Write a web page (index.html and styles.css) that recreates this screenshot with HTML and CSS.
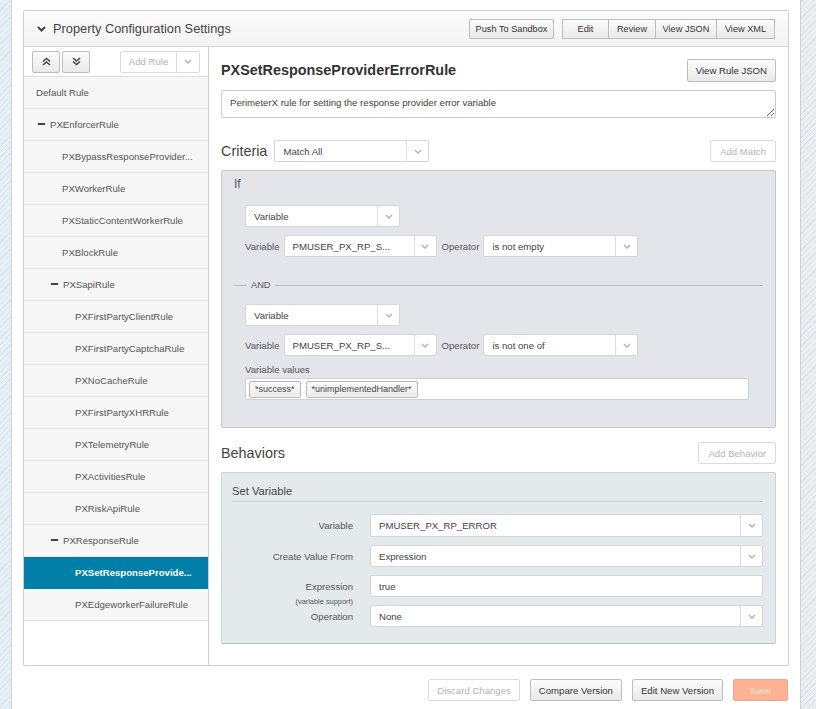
FILE: index.html
```html
<!DOCTYPE html>
<html lang="en">
	<head>
		<meta charset="UTF-8" />
		<meta name="viewport" content="width=device-width, initial-scale=1.0" />
		<title>Property Configuration Settings</title>
		<link rel="stylesheet" href="styles.css">
	</head>
	<body>
		<div class="page">
			<div class="panel">
				<div class="panel__head">
					<svg class="panel__chevron" width="9" height="6" viewBox="0 0 9 6"><polyline points="1,1 4.5,4.5 8,1" fill="none" stroke="#444" stroke-width="2"/></svg>
					<div class="panel__title">Property Configuration Settings</div>
					<div class="panel__actions">
						<button class="btn btn--head btn--w85">Push To Sandbox</button>
						<div class="btn-group">
							<button class="btn btn--head btn--w47">Edit</button>
							<button class="btn btn--head btn--w47">Review</button>
							<button class="btn btn--head btn--w61">View JSON</button>
							<button class="btn btn--head btn--w58">View XML</button>
						</div>
					</div>
				</div>

				<div class="panel__body">
					<div class="sidebar">
						<div class="sidebar__tools">
							<button class="btn btn--icon">
								<svg width="9" height="9" viewBox="0 0 9 9"><polyline points="1,4.5 4.5,1.5 8,4.5" fill="none" stroke="#444" stroke-width="1.6"/><polyline points="1,8 4.5,5 8,8" fill="none" stroke="#444" stroke-width="1.6"/></svg>
							</button>
							<button class="btn btn--icon">
								<svg width="9" height="9" viewBox="0 0 9 9"><polyline points="1,1 4.5,4 8,1" fill="none" stroke="#444" stroke-width="1.6"/><polyline points="1,4.5 4.5,7.5 8,4.5" fill="none" stroke="#444" stroke-width="1.6"/></svg>
							</button>
							<div class="split">
								<button class="btn btn--disabled split__main">Add Rule</button>
								<button class="btn btn--disabled split__arrow">
									<svg width="8" height="5" viewBox="0 0 8 5"><polyline points="1,1 4,4 7,1" fill="none" stroke="#b5b5b5" stroke-width="1.5"/></svg>
								</button>
							</div>
						</div>
						<ul class="tree">
							<li class="tree__item" data-depth="0">Default Rule</li>
							<li class="tree__item tree__item--open" data-depth="1"><span class="tree__minus"></span>PXEnforcerRule</li>
							<li class="tree__item" data-depth="2">PXBypassResponseProvider...</li>
							<li class="tree__item" data-depth="2">PXWorkerRule</li>
							<li class="tree__item" data-depth="2">PXStaticContentWorkerRule</li>
							<li class="tree__item" data-depth="2">PXBlockRule</li>
							<li class="tree__item tree__item--open" data-depth="2"><span class="tree__minus"></span>PXSapiRule</li>
							<li class="tree__item" data-depth="3">PXFirstPartyClientRule</li>
							<li class="tree__item" data-depth="3">PXFirstPartyCaptchaRule</li>
							<li class="tree__item" data-depth="3">PXNoCacheRule</li>
							<li class="tree__item" data-depth="3">PXFirstPartyXHRRule</li>
							<li class="tree__item" data-depth="3">PXTelemetryRule</li>
							<li class="tree__item" data-depth="3">PXActivitiesRule</li>
							<li class="tree__item" data-depth="3">PXRiskApiRule</li>
							<li class="tree__item tree__item--open" data-depth="2"><span class="tree__minus"></span>PXResponseRule</li>
							<li class="tree__item tree__item--active" data-depth="3">PXSetResponseProvide...</li>
							<li class="tree__item" data-depth="3">PXEdgeworkerFailureRule</li>
						</ul>
					</div>

					<div class="main">
						<div class="main__top">
							<h1 class="main__title">PXSetResponseProviderErrorRule</h1>
							<button class="btn btn--big">View Rule JSON</button>
						</div>
						<textarea class="comment" readonly>PerimeterX rule for setting the response provider error variable</textarea>

						<div class="section-head section-head--criteria">
							<div class="section-head__label">Criteria</div>
							<div class="select select--w155">
								<span class="select__value">Match All</span>
								<span class="select__arrow"><svg width="8" height="5" viewBox="0 0 8 5"><polyline points="1,1 4,4 7,1" fill="none" stroke="#b5b5b5" stroke-width="1.5"/></svg></span>
							</div>
							<button class="btn btn--disabled btn--push">Add Match</button>
						</div>

						<div class="criteria">
							<div class="criteria__if">If</div>

							<div class="cond">
								<div class="select select--w155">
									<span class="select__value">Variable</span>
									<span class="select__arrow"><svg width="8" height="5" viewBox="0 0 8 5"><polyline points="1,1 4,4 7,1" fill="none" stroke="#b5b5b5" stroke-width="1.5"/></svg></span>
								</div>
								<div class="cond__row">
									<span class="cond__label">Variable</span>
									<div class="select select--w153">
										<span class="select__value">PMUSER_PX_RP_S...</span>
										<span class="select__arrow"><svg width="8" height="5" viewBox="0 0 8 5"><polyline points="1,1 4,4 7,1" fill="none" stroke="#b5b5b5" stroke-width="1.5"/></svg></span>
									</div>
									<span class="cond__label">Operator</span>
									<div class="select select--w155">
										<span class="select__value">is not empty</span>
										<span class="select__arrow"><svg width="8" height="5" viewBox="0 0 8 5"><polyline points="1,1 4,4 7,1" fill="none" stroke="#b5b5b5" stroke-width="1.5"/></svg></span>
									</div>
								</div>
							</div>

							<div class="joiner"><span class="joiner__dash"></span><span class="joiner__text">AND</span><span class="joiner__line"></span></div>

							<div class="cond">
								<div class="select select--w155">
									<span class="select__value">Variable</span>
									<span class="select__arrow"><svg width="8" height="5" viewBox="0 0 8 5"><polyline points="1,1 4,4 7,1" fill="none" stroke="#b5b5b5" stroke-width="1.5"/></svg></span>
								</div>
								<div class="cond__row">
									<span class="cond__label">Variable</span>
									<div class="select select--w153">
										<span class="select__value">PMUSER_PX_RP_S...</span>
										<span class="select__arrow"><svg width="8" height="5" viewBox="0 0 8 5"><polyline points="1,1 4,4 7,1" fill="none" stroke="#b5b5b5" stroke-width="1.5"/></svg></span>
									</div>
									<span class="cond__label">Operator</span>
									<div class="select select--w155">
										<span class="select__value">is not one of</span>
										<span class="select__arrow"><svg width="8" height="5" viewBox="0 0 8 5"><polyline points="1,1 4,4 7,1" fill="none" stroke="#b5b5b5" stroke-width="1.5"/></svg></span>
									</div>
								</div>
								<div class="cond__values-label">Variable values</div>
								<div class="tags">
									<span class="tag">*success*</span>
									<span class="tag">*unimplementedHandler*</span>
								</div>
							</div>
						</div>

						<div class="section-head section-head--behaviors">
							<div class="section-head__label">Behaviors</div>
							<button class="btn btn--disabled btn--push">Add Behavior</button>
						</div>

						<div class="behavior">
							<div class="behavior__title">Set Variable</div>
							<div class="field">
								<label class="field__label">Variable</label>
								<div class="select select--wide">
									<span class="select__value">PMUSER_PX_RP_ERROR</span>
									<span class="select__arrow"><svg width="8" height="5" viewBox="0 0 8 5"><polyline points="1,1 4,4 7,1" fill="none" stroke="#b5b5b5" stroke-width="1.5"/></svg></span>
								</div>
							</div>
							<div class="field">
								<label class="field__label">Create Value From</label>
								<div class="select select--wide">
									<span class="select__value">Expression</span>
									<span class="select__arrow"><svg width="8" height="5" viewBox="0 0 8 5"><polyline points="1,1 4,4 7,1" fill="none" stroke="#b5b5b5" stroke-width="1.5"/></svg></span>
								</div>
							</div>
							<div class="field">
								<label class="field__label">Expression<span class="field__note">(variable support)</span></label>
								<div class="input">true</div>
							</div>
							<div class="field">
								<label class="field__label">Operation</label>
								<div class="select select--wide">
									<span class="select__value">None</span>
									<span class="select__arrow"><svg width="8" height="5" viewBox="0 0 8 5"><polyline points="1,1 4,4 7,1" fill="none" stroke="#b5b5b5" stroke-width="1.5"/></svg></span>
								</div>
							</div>
						</div>
					</div>
				</div>
			</div>

			<div class="footer">
				<button class="btn btn--disabled btn--foot">Discard Changes</button>
				<button class="btn btn--foot">Compare Version</button>
				<button class="btn btn--foot">Edit New Version</button>
				<button class="btn btn--save">Save</button>
			</div>
		</div>
	</body>
</html>
```

FILE: styles.css
```css
* {
	box-sizing: border-box;
}
body {
	margin: 0;
	height: 709px;
	overflow: hidden;
	font-family: "Liberation Sans", Arial, sans-serif;
	font-size: 9.6px;
	color: #555;
	background: repeating-linear-gradient(135deg, #e8eef2 0, #e8eef2 3px, #dde5ea 3px, #dde5ea 4px);
}
.page {
	margin-left: 11px;
	width: 790px;
	height: 709px;
	padding: 10px 11px 0 11px;
	background: #fff;
	border-left: 1px solid #ccd2d6;
	border-right: 1px solid #ccd2d6;
}

/* panel */

.panel {
	border: 1px solid #cfcfcf;
	border-radius: 2px;
}
.panel__head {
	display: flex;
	align-items: center;
	height: 36px;
	padding: 0 13px;
	border-bottom: 1px solid #d4d4d4;
	background: linear-gradient(#fbfbfb, #f3f3f3);
}
.panel__chevron {
	margin-right: 7px;
}
.panel__title {
	font-size: 12.8px;
	color: #444;
}
.panel__actions {
	display: flex;
	gap: 8px;
	margin-left: auto;
}
.btn-group {
	display: flex;
}
.btn-group .btn + .btn {
	border-left: 0;
}

.btn {
	font-family: inherit;
	font-size: 9.6px;
	color: #333;
	height: 22px;
	padding: 0 10px;
	border: 1px solid #bdbdbd;
	border-radius: 2px;
	background: linear-gradient(#fcfcfc, #e9e9e9);
	cursor: pointer;
	white-space: nowrap;
}
.btn--head {
	height: 20px;
	padding: 0;
	font-size: 9.2px;
}
.btn-group .btn {
	border-radius: 0;
}
.btn--w85 { width: 85px; }
.btn--w47 { width: 47px; }
.btn--w61 { width: 61px; }
.btn--w58 { width: 58px; }
.btn--big {
	height: 23px;
	padding: 0 8px;
	margin-left: auto;
}
.btn--disabled {
	color: #b5b5b5;
	background: #fff;
	border-color: #dcdcdc;
}
.btn--icon {
	width: 28px;
	padding: 0;
	display: flex;
	align-items: center;
	justify-content: center;
}

/* body */

.panel__body {
	display: flex;
	height: 618px;
}
.sidebar {
	width: 185px;
	flex-shrink: 0;
	border-right: 1px solid #cfcfcf;
}
.sidebar__tools {
	display: flex;
	align-items: center;
	gap: 2px;
	height: 30px;
	padding: 0 8px 0 8px;
	border-bottom: 1px solid #ddd;
}
.split {
	display: flex;
	margin-left: auto;
}
.split__main {
	width: 57px;
	padding: 0;
	border-radius: 2px 0 0 2px;
}
.split__arrow {
	width: 23px;
	padding: 0;
	border-left: 0;
	border-radius: 0 2px 2px 0;
	display: flex;
	align-items: center;
	justify-content: center;
}

.tree {
	list-style: none;
	margin: 0;
	padding: 0;
}
.tree__item {
	height: 32px;
	line-height: 31px;
	padding-right: 8px;
	border-bottom: 1px solid #e0e0e0;
	background: #f7f7f7;
	white-space: nowrap;
	overflow: hidden;
	color: #555;
}
.tree__item[data-depth='0'] { padding-left: 12px; }
.tree__item[data-depth='1'] { padding-left: 14px; }
.tree__item[data-depth='2'] { padding-left: 38px; }
.tree__item[data-depth='3'] { padding-left: 51px; }
.tree__item--open[data-depth='2'] { padding-left: 27px; }
.tree__item--active {
	background: #0080a9;
	color: #fff;
	font-weight: bold;
	border-bottom-color: #0080a9;
}
.tree__minus {
	display: inline-block;
	vertical-align: middle;
	width: 7px;
	height: 2px;
	margin: -2px 5px 0 0;
	background: #444;
}

/* main */

.main {
	flex: 1;
	padding: 12px 13px 0 12px;
}
.main__top {
	display: flex;
	align-items: center;
	height: 22px;
}
.main__title {
	margin: 0;
	font-size: 14.4px;
	color: #333;
}
.comment {
	display: block;
	width: 100%;
	height: 28px;
	margin-top: 9px;
	padding: 6px 8px;
	font-family: inherit;
	font-size: 9.6px;
	color: #444;
	border: 1px solid #ccc;
	border-radius: 2px;
	resize: vertical;
}

.section-head {
	display: flex;
	align-items: center;
	height: 22px;
}
.section-head--criteria {
	margin-top: 22px;
}
.section-head--behaviors {
	margin-top: 14px;
}
.section-head__label {
	font-size: 14.4px;
	color: #444;
	margin-right: 7px;
}
.btn--push {
	margin-left: auto;
	padding: 0 9px;
}

.select {
	display: flex;
	height: 22px;
	background: #fff;
	border: 1px solid #d6d6d6;
	border-radius: 2px;
}
.select--w155 { width: 155px; }
.select--w153 { width: 153px; }
.select--wide { width: 393px; }
.behavior__title + .field .select {
	height: 23px;
}
.select__value {
	flex: 1;
	display: flex;
	align-items: center;
	padding-left: 8px;
	color: #444;
	white-space: nowrap;
}
.select__arrow {
	width: 22px;
	display: flex;
	align-items: center;
	justify-content: center;
	border-left: 1px solid #ddd;
}

.criteria {
	margin-top: 8px;
	height: 258px;
	padding: 6px 12px 0 12px;
	background: #e4e5ea;
	border: 1px solid #c8c8cc;
	border-radius: 2px;
}
.criteria__if {
	font-size: 12px;
	line-height: 14px;
	color: #555;
}
.cond {
	padding-left: 11px;
	margin-top: 14px;
}
.cond__row {
	display: flex;
	align-items: center;
	margin-top: 8px;
}
.cond__label {
	margin-right: 4px;
}
.cond .select + .cond__label {
	margin-left: 5px;
}
.joiner {
	display: flex;
	align-items: center;
	height: 12px;
	margin-top: 22px;
}
.joiner + .cond {
	margin-top: 13px;
}
.joiner__dash {
	width: 13px;
	border-top: 1px solid #bbb;
}
.joiner__text {
	padding: 0 5px 0 4px;
	font-size: 9.2px;
}
.joiner__line {
	flex: 1;
	border-top: 1px solid #bbb;
}
.cond__values-label {
	margin-top: 8px;
	line-height: 12px;
}
.tags {
	display: flex;
	align-items: center;
	gap: 5px;
	width: 504px;
	height: 22px;
	margin-top: 2px;
	padding: 0 3px;
	background: #fff;
	border: 1px solid #d0d0d0;
	border-radius: 2px;
}
.tag {
	display: flex;
	align-items: center;
	height: 17px;
	padding: 0 5px;
	font-size: 9px;
	color: #444;
	border: 1px solid #bbb;
	border-radius: 2px;
	background: linear-gradient(#fafafa, #ececec);
}

.behavior {
	margin-top: 8px;
	height: 172px;
	padding: 11px 12px 0 10px;
	background: #e4e9ec;
	border: 1px solid #cdd2d5;
	border-bottom-color: #b9bec1;
	border-radius: 2px;
}
.behavior__title {
	font-size: 11.2px;
	line-height: 14px;
	padding-bottom: 3px;
	border-bottom: 1px solid #cbd0d3;
	color: #444;
}
.field {
	display: flex;
	align-items: center;
	margin-top: 8px;
}
.behavior__title + .field {
	margin-top: 12px;
}
.field__label {
	position: relative;
	width: 121px;
	margin-right: 17px;
	text-align: right;
	color: #555;
}
.field__note {
	position: absolute;
	right: 0;
	top: 16px;
	font-size: 7.4px;
	white-space: nowrap;
}
.input {
	display: flex;
	align-items: center;
	width: 393px;
	height: 22px;
	padding-left: 8px;
	background: #fff;
	border: 1px solid #d6d6d6;
	border-radius: 2px;
	color: #444;
}

/* footer */

.footer {
	display: flex;
	justify-content: flex-end;
	gap: 10px;
	margin-top: 13px;
	margin-right: 1px;
}
.btn--foot {
	padding: 0 8px;
}
.btn--save {
	width: 55px;
	color: #fde3d6;
	background: #fdb293;
	border-color: #f3a587;
}
```
